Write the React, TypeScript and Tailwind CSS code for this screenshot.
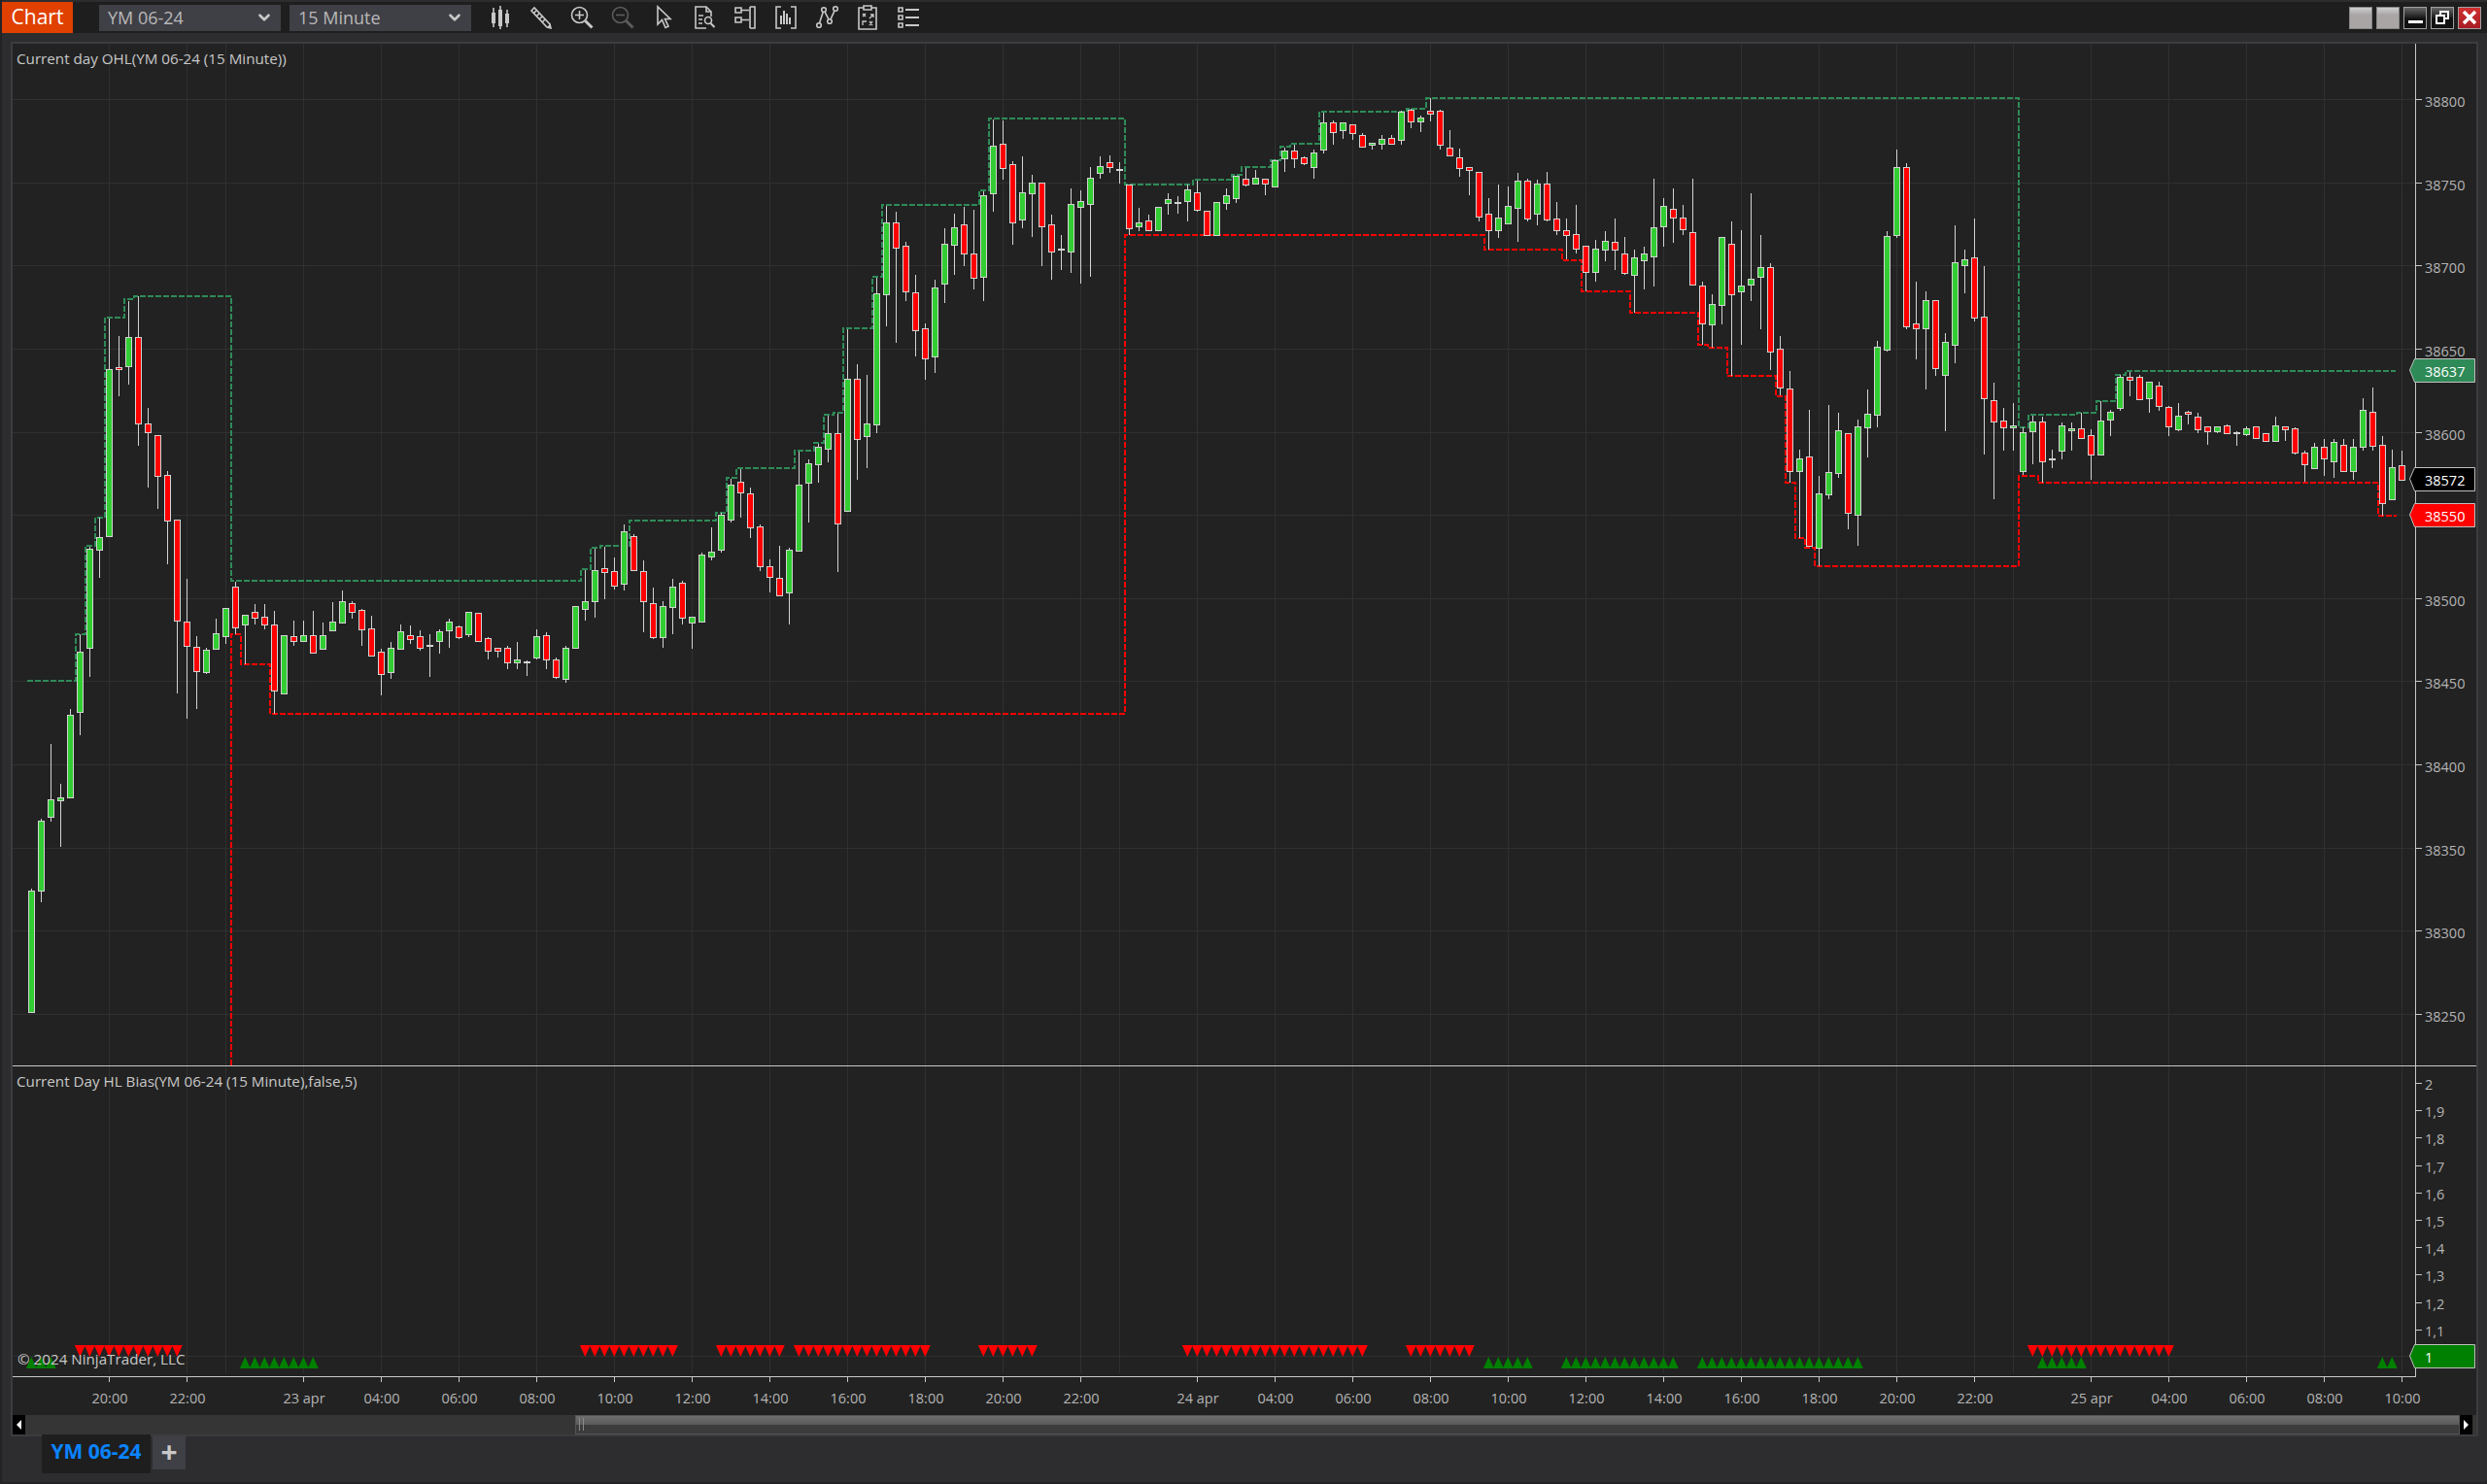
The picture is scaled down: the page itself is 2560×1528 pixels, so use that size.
import { ChevronDown } from "lucide-react";

// candle rows: [high, bodyTop, bodyBottom, low, isUp], measured in crops, y = y0 + v / 3
const GROUPS: { y0: number; rows: number[][] }[] = [
  {
    y0: 540,
    rows: [
      [1125, 1132, 1505, 1505, 1], [910, 916, 1130, 1166, 1], [678, 850, 902, 918, 1], [801, 844, 851, 995, 1],
      [570, 589, 842, 846, 1], [340, 394, 578, 650, 1], [70, 76, 380, 470, 1], [-20, 40, 77, 165, 1],
    ],
  },
  {
    y0: 280,
    rows: [
      [145, 301, 815, 815, 1], [198, 295, 301, 383, 0], [90, 202, 290, 347, 1], [75, 202, 469, 536, 0],
      [420, 469, 496, 665, 0], [505, 505, 629, 731, 0], [615, 628, 767, 903, 0],
    ],
  },
  {
    y0: 540,
    rows: [
      [-15, -15, 296, 521, 0], [168, 301, 374, 600, 0], [345, 379, 452, 570, 0], [380, 388, 455, 462, 1],
      [291, 337, 383, 383, 1], [259, 259, 344, 369, 1], [178, 193, 317, 340, 0], [280, 280, 308, 432, 1],
      [246, 271, 287, 309, 0], [246, 286, 308, 324, 0], [267, 310, 512, 585, 0], [343, 343, 521, 521, 1],
    ],
  },
  {
    y0: 560,
    rows: [
      [237, 286, 299, 315, 0], [237, 283, 299, 303, 1], [207, 283, 335, 335, 0], [243, 283, 323, 323, 1],
      [180, 241, 266, 266, 1], [144, 178, 242, 242, 1], [178, 184, 211, 231, 0], [202, 205, 263, 315, 0],
      [222, 262, 344, 344, 0], [325, 334, 401, 468, 0], [303, 322, 395, 417, 1], [250, 271, 323, 323, 1],
      [252, 283, 293, 309, 0], [267, 286, 320, 330, 0], [279, 312, 314, 411, 1], [265, 271, 299, 339, 1],
      [232, 241, 266, 321, 1], [253, 256, 287, 294, 0], [211, 211, 278, 288, 1], [214, 214, 299, 299, 0],
      [289, 292, 329, 357, 0], [321, 322, 329, 351, 0], [316, 322, 365, 387, 0], [303, 358, 365, 387, 1],
      [360, 364, 365, 408, 1], [265, 286, 350, 357, 1], [274, 283, 356, 387, 0], [351, 358, 410, 417, 0],
      [316, 322, 416, 429, 1], [193, 193, 320, 324, 1], [80, 178, 200, 237, 1], [15, 82, 176, 228, 1],
      [10, 76, 86, 171, 0], [42, 85, 128, 141, 0], [-60, -39, 122, 144, 1], [-30, -24, 82, 82, 0],
      [52, 85, 176, 273, 0], [135, 184, 287, 294, 0], [178, 193, 287, 321, 1], [108, 133, 194, 279, 1],
      [115, 121, 227, 249, 0], [226, 226, 242, 324, 1],
    ],
  },
  {
    y0: 110,
    rows: [
      [1378, 1384, 1590, 1590, 1], [1300, 1375, 1390, 1400, 1], [1255, 1261, 1367, 1377, 1], [1150, 1168, 1274, 1283, 1],
      [1118, 1159, 1190, 1269, 0], [1177, 1195, 1298, 1332, 0], [1290, 1297, 1418, 1434, 0], [1398, 1420, 1453, 1500, 0],
      [1356, 1456, 1508, 1508, 0], [1362, 1369, 1499, 1600, 1], [1065, 1168, 1370, 1370, 1], [1090, 1102, 1160, 1284, 1],
      [1040, 1051, 1103, 1161, 1], [955, 1009, 1057, 1098, 1], [948, 1009, 1288, 1437, 0], [686, 841, 1247, 1247, 1],
      [795, 841, 1025, 1152, 0], [828, 979, 1016, 1116, 1], [527, 577, 980, 1008, 1], [305, 358, 578, 678, 1],
      [324, 358, 436, 729, 0], [418, 430, 569, 600, 0], [519, 574, 691, 771, 0], [669, 685, 776, 843, 0],
      [534, 559, 770, 822, 1], [375, 424, 545, 606, 1], [330, 373, 425, 519, 1], [308, 364, 452, 492, 0],
      [318, 454, 527, 564, 0], [262, 274, 524, 600, 1], [38, 121, 266, 324, 1], [42, 115, 188, 225, 0],
      [169, 178, 358, 426, 0], [153, 265, 347, 375, 1], [210, 235, 266, 402, 1], [235, 235, 368, 492, 0],
      [333, 364, 446, 534, 0], [396, 438, 440, 504, 1], [252, 301, 446, 513, 1], [258, 292, 308, 546, 1],
      [186, 220, 301, 525, 1], [153, 184, 203, 222, 1], [150, 172, 187, 204, 0], [172, 191, 193, 237, 1],
      [240, 240, 374, 396, 0], [312, 358, 368, 384, 1], [333, 352, 382, 382, 0], [310, 310, 380, 384, 1],
    ],
  },
  {
    y0: 90,
    rows: [
      [327, 346, 356, 393, 1], [336, 355, 356, 390, 1], [300, 316, 352, 414, 1], [289, 325, 377, 384, 0],
      [382, 382, 456, 460, 0], [355, 355, 456, 460, 1], [312, 334, 356, 378, 1], [274, 274, 341, 357, 1],
      [249, 283, 299, 306, 0], [255, 280, 296, 300, 1], [283, 283, 296, 333, 0], [222, 226, 305, 305, 1],
      [186, 196, 218, 261, 1], [178, 196, 218, 249, 0], [214, 217, 233, 240, 0], [192, 202, 245, 282, 1],
      [78, 109, 191, 204, 1], [102, 109, 137, 177, 0], [109, 109, 131, 159, 1], [115, 115, 140, 162, 0],
      [141, 146, 182, 182, 0], [171, 172, 176, 192, 1], [148, 160, 173, 192, 1], [148, 157, 173, 177, 0],
      [72, 75, 161, 177, 1], [66, 69, 104, 126, 0], [87, 94, 104, 138, 1], [33, 73, 80, 105, 0],
      [70, 73, 176, 192, 0], [132, 187, 209, 213, 0], [190, 217, 248, 276, 0], [247, 247, 254, 333, 0],
      [262, 262, 398, 414, 0], [342, 391, 440, 501, 0], [300, 403, 440, 465, 1], [306, 367, 419, 419, 1],
      [264, 289, 371, 477, 1], [282, 289, 404, 414, 0], [285, 298, 389, 426, 1], [261, 298, 407, 414, 0],
      [354, 406, 440, 456, 0], [405, 442, 455, 532, 0], [363, 454, 497, 513, 0], [490, 490, 569, 630, 0],
      [471, 499, 569, 600, 1],
    ],
  },
  {
    y0: 150,
    rows: [
      [264, 295, 320, 357, 1], [225, 298, 320, 384, 0], [282, 334, 392, 399, 0], [321, 346, 398, 516, 1],
      [312, 334, 353, 444, 1], [102, 253, 341, 435, 1], [162, 187, 248, 312, 1], [132, 196, 223, 300, 0],
      [183, 223, 259, 276, 0], [102, 268, 428, 428, 0], [420, 433, 548, 615, 0], [459, 490, 551, 624, 1],
      [283, 283, 491, 552, 1], [234, 304, 458, 711, 0], [261, 433, 449, 615, 1], [147, 412, 428, 480, 1],
      [276, 376, 404, 567, 1], [363, 376, 635, 693, 0], [588, 628, 746, 772, 0], [696, 751, 1004, 1041, 0],
      [939, 967, 1004, 1212, 1], [816, 961, 1236, 1240, 0], [1020, 1075, 1241, 1298, 1], [801, 1009, 1076, 1092, 1],
      [825, 880, 1010, 1026, 1], [889, 889, 1133, 1185, 0], [846, 868, 1139, 1236, 1], [753, 829, 869, 963, 1],
      [603, 622, 830, 870, 1], [265, 280, 629, 636, 1], [12, 67, 275, 285, 1], [55, 67, 557, 567, 0],
      [420, 550, 563, 660, 0], [450, 478, 563, 753, 1], [478, 478, 686, 711, 0], [579, 607, 707, 882, 1],
      [246, 361, 614, 672, 1], [321, 352, 368, 456, 1], [225, 346, 530, 543, 0], [372, 529, 779, 954, 0],
      [732, 787, 851, 1092, 0], [810, 850, 869, 942, 0], [795, 865, 869, 942, 1],
    ],
  },
  {
    y0: 360,
    rows: [
      [240, 256, 374, 387, 1], [204, 223, 251, 354, 1], [207, 223, 344, 411, 0], [309, 337, 339, 366, 1],
      [226, 235, 311, 339, 1], [225, 244, 250, 312, 1], [195, 244, 272, 276, 0], [246, 265, 323, 402, 0],
      [160, 220, 323, 323, 1], [186, 193, 215, 267, 1], [78, 85, 179, 189, 1], [68, 85, 92, 144, 0],
      [79, 85, 152, 152, 0], [100, 100, 149, 195, 1], [99, 112, 173, 189, 0], [175, 178, 236, 267, 0],
      [165, 205, 245, 252, 1], [190, 193, 199, 232, 0], [195, 208, 245, 258, 0], [238, 238, 251, 294, 0],
      [238, 238, 251, 258, 1], [232, 235, 257, 257, 0], [252, 255, 257, 297, 1], [238, 244, 260, 266, 1],
      [238, 238, 272, 276, 0], [259, 259, 281, 281, 0], [207, 235, 281, 281, 1], [236, 238, 245, 282, 0],
      [241, 244, 317, 324, 0], [313, 317, 353, 408, 0], [288, 301, 365, 365, 1], [277, 301, 337, 390, 0],
      [277, 286, 344, 396, 1], [276, 295, 374, 374, 0], [276, 301, 374, 402, 1], [150, 187, 301, 312, 1],
      [117, 193, 296, 312, 0], [267, 295, 473, 512, 0], [309, 364, 461, 461, 1], [312, 358, 401, 405, 0],
    ],
  },
];

const CANDLES = GROUPS.flatMap((group) =>
  group.rows.map(([high, top, bottom, low, up]) => ({
    high: Math.round(group.y0 + high / 3),
    top: Math.round(group.y0 + top / 3),
    bottom: Math.round(group.y0 + bottom / 3),
    low: Math.round(group.y0 + low / 3),
    up: up === 1,
  })),
);

const HIGH_LINE =
  "28,701 78,701 78,653 88,653 88,562 98,562 98,533 108,533 108,327 128,327 128,308 138,308 138,305 238,305 238,598 598,598 598,586 608,586 608,564 618,564 618,562 648,562 648,536 737,536 737,528 748,528 748,492 758,492 758,482 818,482 818,464 838,464 838,456 848,456 848,427 858,427 858,425 868,425 868,338 898,338 898,285 908,285 908,211 1008,211 1008,196 1018,196 1018,122 1158,122 1158,190 1228,190 1228,185 1268,185 1268,180 1278,180 1278,172 1308,172 1308,165 1318,165 1318,151 1328,151 1328,148 1358,148 1358,115 1448,115 1448,112 1468,112 1468,101 2078,101 2078,440 2088,440 2088,427 2138,427 2138,425 2158,425 2158,413 2178,413 2178,386 2188,386 2188,382 2466,382";
const LOW_LINE =
  "238,1097 238,653 248,653 248,684 278,684 278,735 1158,735 1158,242 1528,242 1528,257 1608,257 1608,268 1628,268 1628,300 1678,300 1678,322 1748,322 1748,355 1758,355 1758,358 1778,358 1778,387 1828,387 1828,408 1838,408 1838,497 1848,497 1848,554 1858,554 1858,564 1868,564 1868,583 2078,583 2078,490 2098,490 2098,497 2448,497 2448,531 2467,531";

const GRID_X = [
  112, 192, 232, 312, 392, 472, 552, 632, 712, 792, 872, 952, 1032, 1112, 1152, 1232, 1312, 1392, 1472, 1552, 1632, 1712,
  1792, 1872, 1952, 2032, 2072, 2152, 2232, 2312, 2392, 2472,
];

const TIME_LABELS: [number, string][] = [
  [112, "20:00"], [192, "22:00"], [312, "23 apr"], [392, "04:00"], [472, "06:00"], [552, "08:00"], [632, "10:00"],
  [712, "12:00"], [792, "14:00"], [872, "16:00"], [952, "18:00"], [1032, "20:00"], [1112, "22:00"], [1232, "24 apr"],
  [1312, "04:00"], [1392, "06:00"], [1472, "08:00"], [1552, "10:00"], [1632, "12:00"], [1712, "14:00"], [1792, "16:00"],
  [1872, "18:00"], [1952, "20:00"], [2032, "22:00"], [2152, "25 apr"], [2232, "04:00"], [2312, "06:00"], [2392, "08:00"],
  [2472, "10:00"],
];

const PRICES = [38800, 38750, 38700, 38650, 38600, 38550, 38500, 38450, 38400, 38350, 38300, 38250];
const BIAS_LABELS = ["2", "1,9", "1,8", "1,7", "1,6", "1,5", "1,4", "1,3", "1,2", "1,1"];

const RED_RUNS = [[5, 15], [57, 66], [71, 77], [79, 92], [98, 103], [119, 137], [142, 148], [206, 220]];
const GREEN_RUNS = [[0, 2], [22, 29], [150, 154], [158, 169], [172, 188], [207, 211], [242, 243]];

const candleX = (index: number) => 32.5 + index * 10;
const priceY = (index: number) => Math.round(102 + index * 85.64);

function expandRuns(runs: number[][]) {
  return runs.flatMap(([from, to]) => Array.from({ length: to - from + 1 }, (_, offset) => from + offset));
}

function PriceTag({ top, fill, label }: { top: number; fill: string; label: string }) {
  const bottom = top + 24;
  const mid = top + 12;
  return (
    <g>
      <polygon
        points={`2547.5,${top + 0.5} 2485.5,${top + 0.5} 2480.5,${mid} 2485.5,${bottom + 0.5} 2547.5,${bottom + 0.5}`}
        fill={fill}
        stroke="#c0c0c0"
      />
      <text x={2496} y={mid + 7} className="fill-white text-[14.5px]">
        {label}
      </text>
    </g>
  );
}

function MainPanel() {
  return (
    <svg width={2536} height={1052} viewBox="13 45 2536 1052" className="block">
      {GRID_X.map((x) => (
        <line key={x} x1={x + 0.5} x2={x + 0.5} y1={45} y2={1097} stroke="#303030" />
      ))}
      {PRICES.map((price, index) => (
        <line key={price} x1={13} x2={2486} y1={priceY(index) + 0.5} y2={priceY(index) + 0.5} stroke="#303030" />
      ))}
      <polyline points={HIGH_LINE} fill="none" stroke="#2e8b57" strokeWidth={2} strokeDasharray="6 2" shapeRendering="crispEdges" />
      <polyline points={LOW_LINE} fill="none" stroke="#ff0000" strokeWidth={2} strokeDasharray="6 2" shapeRendering="crispEdges" />
      <g shapeRendering="crispEdges">
        {CANDLES.map((candle, index) => {
          const x = candleX(index);
          return (
            <g key={index}>
              <line x1={x} x2={x} y1={candle.high} y2={candle.low} stroke="#d3d3d3" />
              <rect
                x={x - 3}
                y={candle.top + 0.5}
                width={6}
                height={Math.max(candle.bottom - candle.top, 1)}
                fill={candle.up ? "#32cd32" : "#ff0000"}
                stroke="#d3d3d3"
              />
            </g>
          );
        })}
      </g>
      <line x1={2486.5} x2={2486.5} y1={45} y2={1097} stroke="#c8c8c8" />
      {PRICES.map((price, index) => (
        <g key={price}>
          <line x1={2487} x2={2493} y1={priceY(index) + 0.5} y2={priceY(index) + 0.5} stroke="#c8c8c8" />
          <text x={2496} y={priceY(index) + 8} className="fill-[#b4b4b4] text-[14.5px]">
            {price}
          </text>
        </g>
      ))}
      <PriceTag top={369} fill="#2e8b57" label="38637" />
      <PriceTag top={481} fill="#000000" label="38572" />
      <PriceTag top={518} fill="#ff0000" label="38550" />
      <text x={17} y={66} className="fill-[#c8c8c8] text-[15.2px]">
        Current day OHL(YM 06-24 (15 Minute))
      </text>
    </svg>
  );
}

function BiasPanel() {
  return (
    <svg width={2536} height={359} viewBox="13 1098 2536 359" className="block">
      {GRID_X.map((x) => (
        <line key={x} x1={x + 0.5} x2={x + 0.5} y1={1098} y2={1414} stroke="#303030" />
      ))}
      <line x1={13} x2={2486} y1={1396.5} y2={1396.5} stroke="#303030" />
      {expandRuns(RED_RUNS).map((index) => {
        const x = candleX(index) - 0.2;
        return <polygon key={index} points={`${x - 5.5},1385 ${x + 5.5},1385 ${x},1397`} fill="#ff0000" />;
      })}
      {expandRuns(GREEN_RUNS).map((index) => {
        const x = candleX(index) - 0.2;
        return <polygon key={index} points={`${x - 5.5},1409 ${x + 5.5},1409 ${x},1397`} fill="#008000" />;
      })}
      <text x={17} y={1119} className="fill-[#c8c8c8] text-[15.2px]">
        Current Day HL Bias(YM 06-24 (15 Minute),false,5)
      </text>
      <text x={18} y={1405} className="fill-[#c8c8c8] text-[15.2px]">
        © 2024 NinjaTrader, LLC
      </text>
      <line x1={13} x2={2487} y1={1417.5} y2={1417.5} stroke="#c8c8c8" />
      <line x1={2486.5} x2={2486.5} y1={1098} y2={1418} stroke="#c8c8c8" />
      {BIAS_LABELS.map((label, index) => {
        const y = 1115 + index * 28.2;
        return (
          <g key={label}>
            <line x1={2487} x2={2493} y1={Math.round(y) + 0.5} y2={Math.round(y) + 0.5} stroke="#c8c8c8" />
            <text x={2496} y={y + 7} className="fill-[#b4b4b4] text-[14.5px]">
              {label}
            </text>
          </g>
        );
      })}
      <PriceTag top={1384} fill="#008000" label="1" />
      {TIME_LABELS.map(([x, label]) => (
        <g key={`${x}-${label}`}>
          <line x1={x + 0.5} x2={x + 0.5} y1={1418} y2={1423} stroke="#c8c8c8" />
          <text x={x + 1} y={1445} textAnchor="middle" className="fill-[#b4b4b4] text-[14.5px]">
            {label}
          </text>
        </g>
      ))}
    </svg>
  );
}

function ToolIcon({ children, dim }: { children: React.ReactNode; dim?: boolean }) {
  return (
    <svg
      width={26}
      height={26}
      viewBox="0 0 26 26"
      fill="none"
      stroke={dim ? "#5c5c5c" : "#c8c8c8"}
      strokeWidth={1.6}
      className="shrink-0"
    >
      {children}
    </svg>
  );
}

function Toolbar() {
  return (
    <div className="mt-[2px] flex h-[32px] items-center bg-[#1e1e1e]">
      <div className="flex h-[32px] w-[73px] items-center justify-center bg-[#e04000] text-[21px] text-white">Chart</div>
      <div className="ml-[27px] flex h-[27px] w-[187px] items-center justify-between bg-[#3f3f46] pl-[9px] pr-[8px] text-[18px] text-[#b8b8b8]">
        YM 06-24
        <ChevronDown size={18} strokeWidth={3.5} className="text-[#c8c8c8]" />
      </div>
      <div className="ml-[9px] flex h-[27px] w-[187px] items-center justify-between bg-[#3f3f46] pl-[9px] pr-[8px] text-[18px] text-[#b8b8b8]">
        15 Minute
        <ChevronDown size={18} strokeWidth={3.5} className="text-[#c8c8c8]" />
      </div>
      <div className="ml-[17px] flex items-center gap-[16px]">
        <ToolIcon>
          <path d="M6 3v20M13 1v24M20 5v18" />
          <path d="M4 8h4v11H4zM11 5h4v17h-4zM18 9h4v10h-4z" fill="#c8c8c8" stroke="none" />
        </ToolIcon>
        <ToolIcon>
          <path d="M3 6l3-3 16 17 1 4-4-1z" />
          <path d="M5 9l3-3M8 12l3-3M11 15l3-3M14 18l3-3" />
          <path d="M19 23l4-4v5z" fill="#c8c8c8" stroke="none" />
        </ToolIcon>
        <ToolIcon>
          <circle cx="10.5" cy="10.5" r="8" />
          <path d="M10.5 6v9M6 10.5h9" />
          <path d="M16.5 16.5l7 7" strokeWidth={3} />
        </ToolIcon>
        <ToolIcon dim>
          <circle cx="10.5" cy="10.5" r="8" />
          <path d="M6 10.5h9" />
          <path d="M16.5 16.5l7 7" strokeWidth={3} />
        </ToolIcon>
        <ToolIcon>
          <path d="M7 2v18l4.5-4.5 3.5 8 3-1.3-3.5-7.7H20z" />
        </ToolIcon>
        <ToolIcon>
          <path d="M15 24H4V2h11l5 5v5" />
          <path d="M15 2v5h5M7 11h5M7 15h4M7 19h4" />
          <circle cx="17" cy="16" r="3.5" />
          <path d="M19.5 19l4 4" strokeWidth={2} />
        </ToolIcon>
        <ToolIcon>
          <path d="M3 3h6v5H3zM3 13h6v5H3zM9 5.500h8M9 15.500h8M18 2h5v22h-5" />
          <path d="M18 2v22" />
        </ToolIcon>
        <ToolIcon>
          <path d="M8 2H3v22h5M18 2h5v22h-5" />
          <path d="M8 20v-9M11 20V6M14 20V9M17 20v-7" strokeWidth={2} />
        </ToolIcon>
        <ToolIcon>
          <circle cx="5" cy="21" r="2.300" />
          <circle cx="10" cy="5" r="2.300" />
          <circle cx="16" cy="17" r="2.300" />
          <circle cx="22" cy="4" r="2.300" />
          <path d="M5.500 18.700L9.300 7.300M11 7.200l4 7.600M17 14.800l4-8.600" />
        </ToolIcon>
        <ToolIcon>
          <path d="M9 3H4v22h18V3h-5" />
          <path d="M9 1h8v4H9z" />
          <path d="M8 9l3 3M11 9l-3 3M15 14l4-4M16 10h3v3M8 21v-4h4M15 17l3 4M18 17l-3 4" strokeWidth={1.300} />
        </ToolIcon>
        <ToolIcon>
          <path d="M3 3h4v4H3zM3 11h4v4H3zM3 19h4v4H3z" />
          <path d="M10 5h14M10 13h14M10 21h14" strokeWidth={2} />
        </ToolIcon>
      </div>
      <div className="ml-auto mr-[6px] flex items-center gap-[4px]">
        <div className="h-[23px] w-[24px] border border-[#858585] bg-[linear-gradient(#cfcfcf,#a9a5a5_35%)]" />
        <div className="h-[23px] w-[24px] border border-[#858585] bg-[linear-gradient(#cfcfcf,#a9a5a5_35%)]" />
        <div className="flex h-[23px] w-[24px] items-end justify-center border border-[#a0a0a0] bg-[linear-gradient(#666,#111_55%)] pb-[5px]">
          <div className="h-[3px] w-[15px] bg-white" />
        </div>
        <div className="flex h-[23px] w-[24px] items-center justify-center border border-[#a0a0a0] bg-[linear-gradient(#666,#111_55%)]">
          <svg width={16} height={16} viewBox="0 0 16 16" fill="none" stroke="#ffffff" strokeWidth={2}>
            <path d="M6 5V2h8v7h-3" />
            <path d="M2 6h8v8H2z" />
          </svg>
        </div>
        <div className="flex h-[23px] w-[24px] items-center justify-center border border-[#a0a0a0] bg-[linear-gradient(#d03030,#a81c24)]">
          <svg width={16} height={16} viewBox="0 0 16 16" fill="none" stroke="#ffffff" strokeWidth={3.500}>
            <path d="M2 2l12 12M14 2L2 14" />
          </svg>
        </div>
      </div>
    </div>
  );
}

function ScrollBar() {
  return (
    <div className="flex h-[20px] items-stretch bg-[#353535]">
      <div className="flex w-[13px] items-center justify-center bg-black">
        <div className="h-0 w-0 border-y-[5px] border-r-[5px] border-y-transparent border-r-white" />
      </div>
      <div className="w-[566px]" />
      <div className="flex w-[1940px] items-start border border-[#555] bg-[linear-gradient(#6e6e6e,#5a5a5a_50%,#3c3c3c_52%)]">
        <div className="ml-[3px] mt-[2px] h-[13px] w-[5px] border-x border-[#8a8a8a]" />
      </div>
      <div className="flex w-[13px] items-center justify-center bg-black">
        <div className="h-0 w-0 border-y-[5px] border-l-[5px] border-y-transparent border-l-white" />
      </div>
      <div className="w-[4px]" />
    </div>
  );
}

export default function App() {
  return (
    <div className="flex h-[1528px] w-[2560px] flex-col overflow-hidden border-b-2 border-l-2 border-[#232325] bg-[#2d2d30] font-['Open_Sans','Noto_Sans',sans-serif]">
      <Toolbar />
      <div className="ml-[9px] mt-[9px] w-[2540px] border-2 border-[#3c3c3f] bg-[#222222]">
        <MainPanel />
        <div className="h-px bg-[#c8c8c8]" />
        <BiasPanel />
        <ScrollBar />
      </div>
      <div className="z-10 -mt-[2px] ml-[41px] flex items-start gap-[2px]">
        <div className="flex h-[40px] w-[112px] items-center justify-center bg-[#1e1e1e] pb-[5px] text-[21px] font-bold text-[#0a84ff]">
          YM 06-24
        </div>
        <div className="mt-[2px] flex h-[34px] w-[34px] items-center justify-center bg-[#3f3f46] pb-[3px] text-[30px] font-bold leading-none text-[#c8c8c8]">
          +
        </div>
      </div>
    </div>
  );
}
